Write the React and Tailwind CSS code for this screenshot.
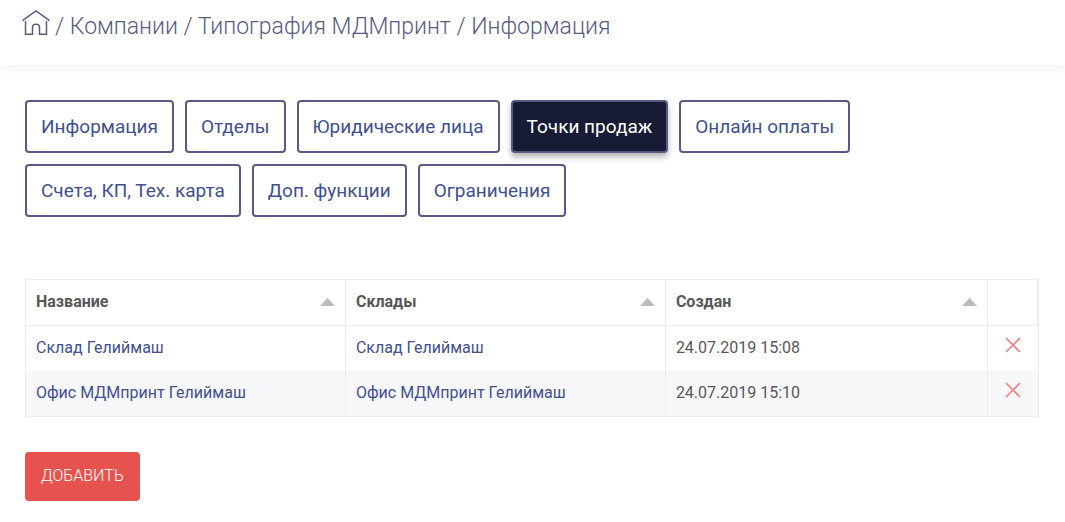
import React from "react";

const tabs = [
  "Информация",
  "Отделы",
  "Юридические лица",
  "Точки продаж",
  "Онлайн оплаты",
  "Счета, КП, Тех. карта",
  "Доп. функции",
  "Ограничения",
];
const activeTab = "Точки продаж";

const columns = ["Название", "Склады", "Создан"];

const rows = [
  { name: "Склад Гелиймаш", store: "Склад Гелиймаш", created: "24.07.2019 15:08" },
  { name: "Офис МДМпринт Гелиймаш", store: "Офис МДМпринт Гелиймаш", created: "24.07.2019 15:10" },
];

function HomeIcon() {
  return (
    <svg width="28" height="26" viewBox="0 0 28 26" fill="none" stroke="currentColor" strokeWidth="1.5" aria-hidden="true">
      <path d="M0.4 10.6 L14 1 L27.6 10.6" />
      <path d="M3.5 11 V24.3 H10.5 V17.5 C10.5 13.2 17.5 13.2 17.5 17.5 V24.3 H24.5 V11" />
    </svg>
  );
}

function Breadcrumb() {
  return (
    <header className="bg-white px-[22px] pt-[9px] pb-5 shadow-[0_1px_15px_1px_rgba(69,65,78,0.08)]">
      <nav aria-label="Навигация" className="flex items-start gap-[5px] text-[#575b82]">
        <a href="#home" aria-label="Главная" className="pt-px">
          <HomeIcon />
        </a>
        <span className="text-[23px] leading-9 font-light">
          / <a href="#companies">Компании</a> / <a href="#company">Типография МДМпринт</a> / Информация
        </span>
      </nav>
    </header>
  );
}

function Tabs() {
  return (
    <nav aria-label="Разделы" className="flex flex-wrap gap-[11px]">
      {tabs.map((tab) => (
        <a
          key={tab}
          href="#tab"
          aria-current={tab === activeTab ? "page" : undefined}
          className={
            tab === activeTab
              ? "rounded-[4px] border-2 border-[#575b82] bg-[#181b35] px-[14px] py-3 text-[19px] leading-[25px] text-white shadow-[0_4px_6px_rgba(0,0,0,0.3)]"
              : "rounded-[4px] border-2 border-[#575b82] px-[14px] py-3 text-[19px] leading-[25px] text-[#41508f]"
          }
        >
          {tab}
        </a>
      ))}
    </nav>
  );
}

function PointsTable() {
  return (
    <table className="w-full table-fixed border-collapse border border-[#ececee] text-base leading-6 text-[#575757]">
      <colgroup>
        <col className="w-[31.6%]" />
        <col className="w-[31.6%]" />
        <col />
        <col className="w-[51px]" />
      </colgroup>
      <thead>
        <tr className="h-[46px]">
          {columns.map((column) => (
            <th key={column} scope="col" className="border border-[#ececee] px-[10px] pb-[2px] text-left font-bold">
              <div className="flex items-center justify-between">
                {column}
                <svg width="15" height="8" viewBox="0 0 15 8" fill="#bbbbbb" aria-hidden="true">
                  <path d="M0 8 L7.5 0 L15 8 Z" />
                </svg>
              </div>
            </th>
          ))}
          <td className="border border-[#ececee] border-r-2" />
        </tr>
      </thead>
      <tbody>
        {rows.map((row) => (
          <tr key={row.name} className="h-[45px] even:h-[46px] even:bg-[#f7f7fa]">
            <td className="border-x border-[#ececee] px-[10px]">
              <a href="#point" className="text-[#41508f]">{row.name}</a>
            </td>
            <td className="border-x border-[#ececee] px-[10px]">
              <a href="#store" className="text-[#41508f]">{row.store}</a>
            </td>
            <td className="border-x border-[#ececee] px-[10px]">{row.created}</td>
            <td className="border-x border-[#ececee] pb-[6px] text-center">
              <button type="button" aria-label="Удалить" className="block w-full cursor-pointer text-[#f08080]">
                <svg className="mx-auto" width="16" height="16" viewBox="0 0 16 16" fill="none" stroke="currentColor" strokeWidth="1.6" aria-hidden="true">
                  <path d="M1 1 L15 15 M15 1 L1 15" />
                </svg>
              </button>
            </td>
          </tr>
        ))}
      </tbody>
    </table>
  );
}

export default function App() {
  return (
    <div className="min-h-screen bg-white font-[Roboto,sans-serif]">
      <Breadcrumb />
      <main className="pt-[35px] pr-[26px] pb-5 pl-[25px]">
        <Tabs />
        <div className="mt-[62px]">
          <PointsTable />
        </div>
        <button type="button" className="mt-[35px] cursor-pointer rounded-[4px] bg-[#e6534e] px-4 pt-[11px] pb-[13px] text-base leading-[25px] font-light text-white uppercase">
          Добавить
        </button>
      </main>
    </div>
  );
}
